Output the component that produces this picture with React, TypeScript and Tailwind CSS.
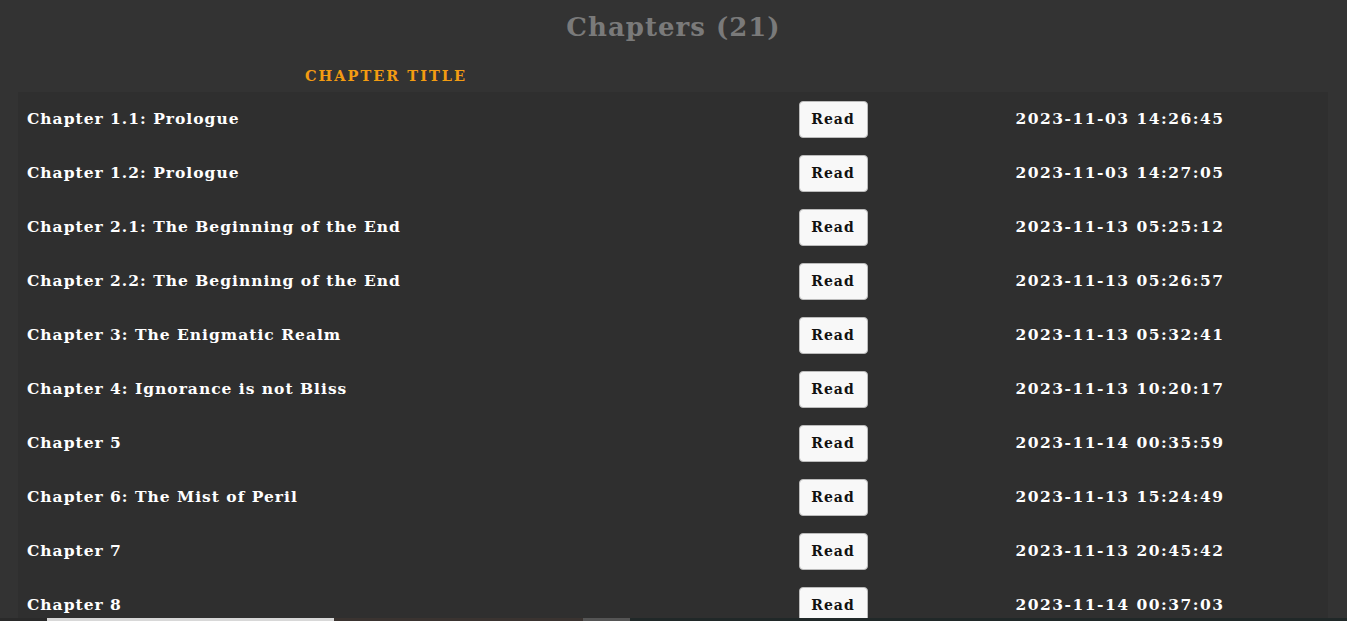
import React from "react";

const rows: [string, string][] = [
  ["Chapter 1.1: Prologue", "2023-11-03 14:26:45"],
  ["Chapter 1.2: Prologue", "2023-11-03 14:27:05"],
  ["Chapter 2.1: The Beginning of the End", "2023-11-13 05:25:12"],
  ["Chapter 2.2: The Beginning of the End", "2023-11-13 05:26:57"],
  ["Chapter 3: The Enigmatic Realm", "2023-11-13 05:32:41"],
  ["Chapter 4: Ignorance is not Bliss", "2023-11-13 10:20:17"],
  ["Chapter 5", "2023-11-14 00:35:59"],
  ["Chapter 6: The Mist of Peril", "2023-11-13 15:24:49"],
  ["Chapter 7", "2023-11-13 20:45:42"],
  ["Chapter 8", "2023-11-14 00:37:03"],
];

export default function App() {
  return (
    <div
      className="relative h-[621px] overflow-hidden bg-[#333333]"
      style={{ fontFamily: '"DejaVu Serif", "Liberation Serif", serif' }}
    >
      <h1 className="h-[54px] pt-[7px] text-center text-[26px] font-bold leading-[40px] tracking-[1px] text-[#7a7a7a]">
        Chapters (21)
      </h1>
      <div className="mx-[18px] w-[1310px]">
        <div className="grid h-[38px] grid-cols-[736px_158px_416px] items-center">
          <div className="pt-[6px] text-center text-[14.5px] font-bold uppercase tracking-[2px] text-[#f39c12]">
            Chapter Title
          </div>
          <div />
          <div />
        </div>
        <div className="bg-[#2f2f2f]">
          {rows.map(([t, d]) => (
            <div
              key={t}
              className="grid h-[54px] grid-cols-[736px_158px_416px] items-center"
            >
              <div className="pl-[9px] text-[15.5px] font-bold leading-[20px] tracking-[1px] text-white">
                {t}
              </div>
              <div className="flex justify-center">
                <button className="h-[37px] w-[69px] rounded-[4px] border border-[#bbbbbb] bg-[#f8f8f8] text-[14px] font-bold leading-[20px] tracking-[1px] text-[#111111]">
                  Read
                </button>
              </div>
              <div className="text-center text-[15.5px] font-bold leading-[20px] tracking-[1.5px] text-white">
                {d}
              </div>
            </div>
          ))}
        </div>
      </div>
      <div className="absolute bottom-0 left-0 flex h-[3px] w-full bg-[#1f2a2a]">
        <div className="w-[47px] bg-[#2a2a2a]" />
        <div className="w-[287px] bg-[#d8d8d8]" />
        <div className="w-[249px] bg-[#3a3330]" />
        <div className="w-[47px] bg-[#555555]" />
        <div className="flex-1 bg-[#202828]" />
      </div>
    </div>
  );
}
